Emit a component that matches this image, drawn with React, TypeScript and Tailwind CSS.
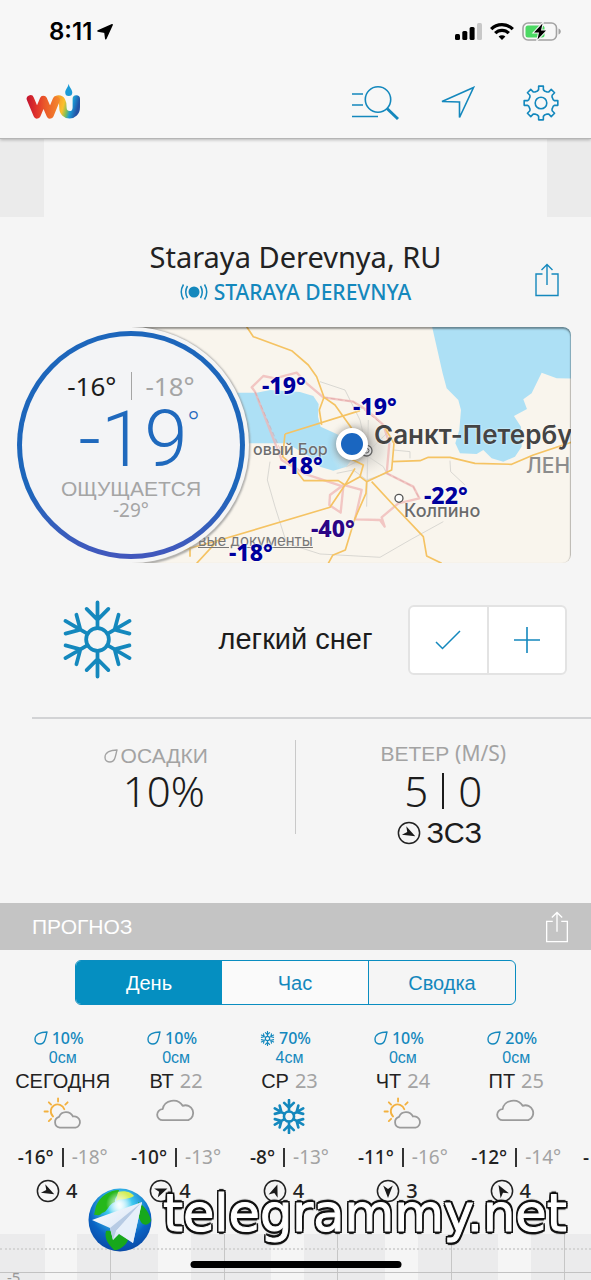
import React from "react";

const NOTO = "font-['Noto_Sans','Open_Sans',sans-serif]";

function Snowflake({ className, stroke }: { className: string; stroke: number }) {
  return (
    <svg viewBox="-36 -40 72 80" className={className} fill="none" stroke="#1488bd" strokeWidth={stroke} strokeLinecap="round" aria-hidden="true">
      <circle r="11.5" />
      {[0, 60, 120, 180, 240, 300].map((angle) => (
        <path key={angle} d="M0 -12V-37.5M-11 -31L0 -20L11 -31" transform={`rotate(${angle})`} />
      ))}
    </svg>
  );
}

function Drop({ className }: { className: string }) {
  return (
    <svg viewBox="0 0 14 14" className={className} fill="none" stroke="currentColor" strokeWidth="1.4" strokeLinejoin="round" aria-hidden="true">
      <path d="M13 1C7 1 1 3 1 8.5C1 11.500 3.500 13 6 13C11.500 13 11.500 6 13 1Z" />
    </svg>
  );
}

function WindArrow({ angle, className }: { angle: number; className: string }) {
  return (
    <svg viewBox="-12 -12 24 24" className={className} aria-hidden="true">
      <circle r="10.6" fill="none" stroke="#222" strokeWidth="1.5" />
      <path d="M0 -7L4.800 5.500L0 2L-4.800 5.500Z" fill="#1a1a1a" transform={`rotate(${angle})`} />
    </svg>
  );
}

function SunCloud() {
  return (
    <svg viewBox="130 618 120 100" className="h-[33px] w-10" fill="none" strokeWidth="5.500" strokeLinecap="round" aria-label="Переменная облачность">
      <g stroke="#f3b13f">
        <path d="M160 677A21 21 0 1 1 194 655" />
        <path d="M175 622V632M147 634L154 641M204 634L197 641M134 662H144M147 691L154 684" />
      </g>
      <path d="M180 711A17 17 0 0 1 178 678A23 23 0 0 1 220 677A17 17 0 0 1 228 711Z" stroke="#9b9b9b" strokeLinejoin="round" />
    </svg>
  );
}

function Cloud() {
  return (
    <svg viewBox="470 625 120 74" className="h-[25px] w-10" fill="none" stroke="#9b9b9b" strokeWidth="5.500" strokeLinejoin="round" aria-label="Облачно">
      <path d="M490 694A16 16 0 0 1 490 661A32 29 0 0 1 550 651A22 22 0 0 1 567 694Z" />
    </svg>
  );
}

function Share({ className }: { className: string }) {
  return (
    <svg viewBox="0 0 24 34" className={className} fill="none" stroke="currentColor" strokeWidth="1.4" aria-hidden="true">
      <path d="M7.500 11H1V32.500H23V11H16.500M12 22V2M6.500 7L12 1.500L17.500 7" />
    </svg>
  );
}

function gearPath() {
  const points: string[] = [];
  for (let i = 0; i < 8; i++) {
    [[-16, 12.6], [-10, 13.6], [-8, 17], [8, 17], [10, 13.6], [16, 12.6]].forEach(([offset, radius]) => {
      const a = ((i * 45 + offset - 90) * Math.PI) / 180;
      points.push(`${(Math.cos(a) * radius).toFixed(2)} ${(Math.sin(a) * radius).toFixed(2)}`);
    });
  }
  return `M${points.join("L")}Z`;
}

function StatusBar() {
  return (
    <div className="flex h-[62px] items-center justify-between pr-[30px] pl-[49px]">
      <div className="flex items-center gap-[5px] pt-[2px]">
        <span className="font-['Inter',sans-serif] text-2xl font-semibold text-black">8:11</span>
        <svg viewBox="0 0 16 16" className="size-4" aria-hidden="true">
          <path d="M15.200 .8L8.800 14.800L7.900 8.200L1 7Z" stroke="#000" strokeWidth="1.500" strokeLinejoin="round" />
        </svg>
      </div>
      <div className="flex items-center gap-2">
        <svg viewBox="0 0 27 17" className="h-[17px] w-[27px]" aria-hidden="true">
          <rect y="11" width="5" height="6" rx="1.500" />
          <rect x="7.300" y="8" width="5" height="9" rx="1.500" />
          <rect x="14.600" y="4" width="5" height="13" rx="1.500" />
          <rect x="22" width="5" height="17" rx="1.500" fill="#c8c8c8" />
        </svg>
        <svg viewBox="0 0 24 17" className="h-[17px] w-6" fill="none" stroke="#000" strokeWidth="3.200" aria-hidden="true">
          <path d="M1.200 6.200C7 .2 17 .2 22.800 6.200M5.200 10.200C9 6.300 15 6.300 18.800 10.200" />
          <path d="M12 17L8.600 13.400C10.500 11.800 13.500 11.800 15.400 13.400Z" fill="#000" stroke="none" />
        </svg>
        <svg viewBox="0 0 39 19" className="h-[19px] w-[39px]" aria-hidden="true">
          <rect x="1" y="1" width="33.500" height="17" rx="5" fill="none" stroke="#a3a3a3" strokeWidth="1.600" />
          <rect x="3.500" y="3.500" width="19" height="12" rx="2.500" fill="#4cd964" />
          <path d="M36.500 6.500C39.500 7.500 39.500 11.500 36.500 12.500Z" fill="#a3a3a3" />
          <path d="M20.500 1.500L12 10.500H17L15.500 17.500L24 8.500H19Z" stroke="#f7f7f7" strokeWidth="2" paintOrder="stroke" />
        </svg>
      </div>
    </div>
  );
}

function Logo() {
  return (
    <svg viewBox="78 248 164 110" className="h-[37px] w-[55px]" fill="none" strokeWidth="22" strokeLinecap="round" strokeLinejoin="round" role="img" aria-label="Weather Underground">
      <defs>
        <linearGradient id="w" gradientUnits="userSpaceOnUse" x1="82" y1="0" x2="178" y2="0">
          <stop offset="0" stopColor="#c4162f" />
          <stop offset=".3" stopColor="#e2352b" />
          <stop offset=".55" stopColor="#ea5a2a" />
          <stop offset="1" stopColor="#f58a2c" />
        </linearGradient>
        <linearGradient id="u" gradientUnits="userSpaceOnUse" x1="168" y1="305" x2="232" y2="322">
          <stop offset="0" stopColor="#f59a2a" />
          <stop offset=".35" stopColor="#fbc02d" />
          <stop offset=".55" stopColor="#7fbf5a" />
          <stop offset=".72" stopColor="#1b9bd7" />
          <stop offset="1" stopColor="#2452a4" />
        </linearGradient>
      </defs>
      <path d="M172 296C184 294 188 304 188 321C188 350 228 350 228 320V295" stroke="url(#u)" />
      <path d="M91 295L111 343L130 297L150 343L168 299" stroke="url(#w)" />
      <path d="M205 250C203 262 195 268 195 276A10.500 10.500 0 0 0 216 276C216 268 208 262 205 250Z" fill="#1b9bd7" />
    </svg>
  );
}

function Header() {
  return (
    <header className="relative border-b border-[#b5b5b5] bg-[#f7f7f7] shadow-[0_1px_3px_rgba(0,0,0,0.25)]">
      <StatusBar />
      <div className="flex h-[76px] items-center justify-between pt-[6px] pr-8 pl-[26px]">
        <a href="#home" className="mb-1"><Logo /></a>
        <nav className="flex items-center gap-[42px]">
          <button type="button" aria-label="Поиск">
            <svg viewBox="0 0 47 35" className="h-[35px] w-[47px]" fill="none" stroke="#1488bd" strokeWidth="1.600" aria-hidden="true">
              <circle cx="26" cy="13.500" r="12.700" />
              <path d="M0 8H11M0 19H11M0 30.500H26" />
              <path d="M35 22.500L46 33" strokeWidth="3" />
            </svg>
          </button>
          <button type="button" aria-label="Моё местоположение">
            <svg viewBox="0 0 40 35" className="h-[35px] w-10" fill="none" stroke="#1488bd" strokeWidth="1.600" aria-hidden="true">
              <path d="M32.500 1.500L1 15.500L18.500 16V31.500Z" />
            </svg>
          </button>
          <button type="button" aria-label="Настройки">
            <svg viewBox="-18 -18 36 36" className="size-9" fill="none" stroke="#1488bd" strokeWidth="1.600" strokeLinejoin="round" aria-hidden="true">
              <path d={gearPath()} />
              <circle r="5.800" />
            </svg>
          </button>
        </nav>
      </div>
    </header>
  );
}

const readings = [
  { text: "-19°", className: "left-[131px] top-[47px] text-[#00009c]" },
  { text: "-19°", className: "left-[222px] top-[68px] text-[#00009c]" },
  { text: "-18°", className: "left-[148px] top-[127px] text-[#00009c]" },
  { text: "-22°", className: "left-[293px] top-[157px] text-[#00009c]" },
  { text: "-40°", className: "left-[180px] top-[190px] text-[#2c0585]" },
  { text: "-18°", className: "left-[98px] top-[214px] text-[#00009c]" },
];

function CityMap() {
  return (
    <div className="relative h-[236px] flex-1 overflow-hidden rounded-r-lg bg-[#f9f5ed] font-['Inter',sans-serif] whitespace-nowrap">
      <svg className="absolute inset-0 size-full" fill="none" aria-hidden="true">
        <defs>
          <radialGradient id="urban">
            <stop offset="0" stopColor="#c9c7c3" stopOpacity=".9" />
            <stop offset=".5" stopColor="#dcd9d3" stopOpacity=".7" />
            <stop offset="1" stopColor="#f9f5ed" stopOpacity="0" />
          </radialGradient>
          <filter id="soft" x="-20%" y="-20%" width="140%" height="140%"><feGaussianBlur stdDeviation="1" /></filter>
        </defs>
        <g transform="translate(89 -17) scale(.3333)" strokeLinejoin="round">
          <path d="M634 40L650 110L668 190L680 235L715 270L723 300L718 360L706 400L720 430L770 432L790 420L815 445L850 455L885 440L905 410L903 350L882 318L921 297L910 268L935 250L965 188L1010 205L1060 206V40Z" fill="#ade0f5" />
          <path d="M0 248H110L150 240L240 246L280 258L296 282L294 320L302 350L350 372L392 395L400 440L380 470L340 482L300 470L270 440L200 400H0Z" fill="#ade0f5" />
          <circle cx="432" cy="410" r="105" fill="url(#urban)" />
          <path d="M150 455L142 510L165 590L200 700L300 732L480 742L570 690L670 635M300 215L375 240L420 330L445 440L490 470L500 490L440 510L400 480L350 490M520 420L570 425V445M690 452L692 485L735 525M445 330L440 590M500 370L420 450L380 470" stroke="#d3d1cc" strokeWidth="2.500" />
          <path d="M105 245L95 232L130 198L165 205L230 188L260 220L310 262L400 275L440 300L490 345L508 400L500 490L580 530L598 565L535 580L485 622L494 650L480 630L405 628L425 540L370 525L330 555L328 585L362 608L370 530L250 490L185 450L105 245" stroke="#efb6b4" strokeOpacity=".75" strokeWidth="7" />
          <path d="M105 245L190 440L250 490M310 262L400 275L490 345M500 490L580 530L598 565" stroke="#d99a9c" strokeOpacity=".8" strokeWidth="2" strokeDasharray="14 8" />
          <path d="M80 50L100 80L215 122L265 165L290 200L312 262L345 285L395 355M312 262L298 300L305 345M195 372L420 302M195 372L188 440L215 465L252 512H355L375 525L420 500L430 465L380 440M-110 720L0 690L330 592L375 525L405 475M515 455L600 452L625 442H690L765 460L875 463L940 435L1060 395M420 500L440 515L438 550L405 625L376 720L338 736L325 760M440 515L515 480L522 400L490 345M455 515L520 585L610 680L620 738L665 760M-70 760L-10 695M-90 700V740" stroke="#f5c363" strokeWidth="5" />
          <circle cx="440" cy="422" r="16" stroke="#666" strokeWidth="4" fill="#eee" />
          <circle cx="440" cy="422" r="7" stroke="#666" strokeWidth="3" />
          <circle cx="537" cy="565" r="12" stroke="#555" strokeWidth="4" fill="#fff" />
        </g>
        <circle cx="0" cy="119" r="118" stroke="#8a8a8a" strokeWidth="2" filter="url(#soft)" />
      </svg>
      <div className="absolute inset-0 rounded-r-lg shadow-[inset_0_2px_2px_rgba(0,0,0,0.4),inset_-1px_0_1px_rgba(0,0,0,0.15)]" />
      <span className="absolute top-[112px] left-[122px] text-base leading-5 font-medium text-[#6e6e6e] [text-shadow:0_0_2px_#fff]">овый Бор</span>
      <span className="absolute top-[92px] left-[243px] text-[26px] leading-8 font-semibold text-[#444] [text-shadow:0_0_2px_#fff]">Санкт-Петербу</span>
      <span className="absolute top-[125px] left-[395px] text-[21px] leading-7 font-medium text-[#8c8c8c]">ЛЕН</span>
      <span className="absolute top-[173px] left-[273px] text-lg leading-[22px] font-medium text-[#6b6b6b] [text-shadow:0_0_2px_#fff]">Колпино</span>
      <a href="#legal" className="absolute top-[204px] left-[67px] text-[15px] leading-5 text-[#777] underline">вые документы</a>
      <span className="absolute top-[101px] left-[205px] size-8 rounded-full border-[5px] border-white bg-[#1a66c0] shadow-[0_1px_8px_rgba(0,0,0,0.45)]" />
      {readings.map((r, i) => (
        <span key={i} className={`absolute ${NOTO} text-[23px] leading-[22px] font-extrabold [text-shadow:0_0_3px_#fff,0_0_2px_#fff] ${r.className}`}>{r.text}</span>
      ))}
    </div>
  );
}

function Current() {
  return (
    <section className="relative flex pr-5 pl-[131px]">
      <CityMap />
      <div className="absolute top-0 left-[13px] flex size-[236px] items-center justify-center rounded-full bg-[#f5f5f5]">
        <div className="size-[228px] rounded-full bg-linear-to-b from-[#1d66bb] from-70% to-[#4257bd] p-[5px]">
          <div className={`flex size-full flex-col items-center rounded-full bg-[#f3f4f6] pt-8 ${NOTO}`}>
            <div className="flex items-center gap-[14px] text-[26px] leading-9">
              <span className="text-[#1c1c1c]">-16°</span>
              <span className="h-7 w-px bg-[#a5a5a5]" />
              <span className="text-[#a5a5a5]">-18°</span>
            </div>
            <div className="flex items-start text-[#1f69bd]">
              <span className="pl-4 font-['Roboto',sans-serif] text-[78px] leading-[72px] font-light">-19</span>
              <span className="text-[28px] leading-8 font-light">°</span>
            </div>
            <span className="pt-[2px] font-['Liberation_Sans',sans-serif] text-[21px] leading-[22px] text-[#a5a5a5]">ОЩУЩАЕТСЯ</span>
            <span className="text-[19px] leading-5 text-[#a5a5a5]">-29°</span>
          </div>
        </div>
      </div>
    </section>
  );
}

function Condition() {
  return (
    <section className="grid grid-cols-[1fr_auto_1fr] items-center px-6 pt-[37px] pb-[38px]">
      <Snowflake className="ml-[37px] h-[79px] w-[73px]" stroke={3.8} />
      <h2 className="text-[29px] text-[#1c1c1c]">легкий снег</h2>
      <div className="flex h-[70px] w-[159px] justify-self-end rounded-md border-2 border-[#e3e3e3] bg-white">
        <button type="button" aria-label="Подтвердить" className="flex flex-1 items-center justify-center border-r-2 border-[#e3e3e3]">
          <svg viewBox="0 0 26 20" className="h-5 w-[26px]" fill="none" stroke="#1488bd" strokeWidth="1.500" aria-hidden="true"><path d="M1 12L7.500 18.500L25 1" /></svg>
        </button>
        <button type="button" aria-label="Добавить" className="flex flex-1 items-center justify-center">
          <svg viewBox="0 0 26 26" className="size-[26px]" fill="none" stroke="#1488bd" strokeWidth="1.600" aria-hidden="true"><path d="M13 0V26M0 13H26" /></svg>
        </button>
      </div>
    </section>
  );
}

function Stats() {
  return (
    <section>
      <div className="ml-8 h-[2px] bg-[#d2d3d5]" />
      <div className="grid grid-cols-2 pt-[21px] pb-[52px]">
        <div className="relative flex flex-col items-center pt-[3px] pl-8">
          <div className="flex items-center gap-[3px] pr-4 text-[21px] leading-[26px] text-[#a3a3a3]"><Drop className="size-[14px]" />ОСАДКИ</div>
          <div className={`${NOTO} text-[42px] leading-[44px] font-light text-[#1c1c1c]`}>10%</div>
          <div className="absolute top-0 right-0 h-[94px] w-px bg-[#c9c9c9]" />
        </div>
        <div className="flex flex-col items-center">
          <div className="text-[21px] leading-[26px] text-[#a3a3a3]">ВЕТЕР <span className={NOTO}>(M/S)</span></div>
          <div className={`flex items-center gap-[14px] ${NOTO} text-[42px] leading-[48px] font-light text-[#1c1c1c]`}>
            5<span className="h-9 w-[2px] bg-[#1c1c1c]" />0
          </div>
          <div className="flex items-center gap-[6px] pr-2 text-[29px] leading-9 text-[#1c1c1c]"><WindArrow angle={117} className="size-6" />ЗСЗ</div>
        </div>
      </div>
    </section>
  );
}

const days = [
  { chance: "10%", amount: "0см", name: "СЕГОДНЯ", date: "", sky: "sun", high: "-16°", low: "-18°", wind: 4, angle: 117 },
  { chance: "10%", amount: "0см", name: "ВТ", date: "22", sky: "cloud", high: "-10°", low: "-13°", wind: 4, angle: 68 },
  { chance: "70%", amount: "4см", name: "СР", date: "23", sky: "snow", high: "-8°", low: "-13°", wind: 4, angle: 20 },
  { chance: "10%", amount: "0см", name: "ЧТ", date: "24", sky: "sun", high: "-11°", low: "-16°", wind: 3, angle: 180 },
  { chance: "20%", amount: "0см", name: "ПТ", date: "25", sky: "cloud", high: "-12°", low: "-14°", wind: 4, angle: -30 },
];

function Forecast() {
  return (
    <section>
      <div className="flex h-[47px] items-center justify-between bg-[#c4c4c4] pr-[22px] pl-8 text-white">
        <h2 className="text-[21px]">ПРОГНОЗ</h2>
        <button type="button" aria-label="Поделиться прогнозом"><Share className="h-8 w-6" /></button>
      </div>
      <div className="mx-[75px] mt-[10px] flex h-[45px] overflow-hidden rounded-md border border-[#0a8dc0] text-xl text-[#1488bd]">
        <button type="button" aria-pressed="true" className="flex-1 bg-[#058fc1] text-white">День</button>
        <button type="button" className="flex-1 border-r border-[#0a8dc0] bg-[#fafafa]">Час</button>
        <button type="button" className="flex-1">Сводка</button>
      </div>
      <div className="mr-[18px] ml-[6px] grid auto-cols-[20%] grid-flow-col pt-[23px]">
        {days.map((d) => (
          <article key={d.name} className={`flex flex-col items-center whitespace-nowrap ${NOTO}`}>
            <div className="flex items-center gap-1 pr-2 text-base leading-5 font-medium text-[#1488bd]">
              {d.sky === "snow" ? <Snowflake className="size-[15px]" stroke={6} /> : <Drop className="size-[14px]" />}
              {d.chance}
            </div>
            <div className="font-['Liberation_Sans',sans-serif] text-base leading-[19px] text-[#1488bd]">{d.amount}</div>
            <h3 className="flex gap-[6px] text-xl leading-7 text-[#222]">
              <span className="font-['Liberation_Sans',sans-serif]">{d.name}</span>
              {d.date && <span className="text-[#a3a3a3]">{d.date}</span>}
            </h3>
            <div className="flex h-12 items-start pt-[2px]">
              {d.sky === "sun" && <SunCloud />}
              {d.sky === "cloud" && <Cloud />}
              {d.sky === "snow" && <Snowflake className="mt-[2px] h-[35px] w-8" stroke={6} />}
            </div>
            <div className="flex items-center gap-2 text-[19px] leading-7 text-[#222]">
              <span className="font-medium">{d.high}</span>
              <span className="h-[19px] w-[2px] bg-[#333]" />
              <span className="text-[#a3a3a3]">{d.low}</span>
            </div>
            <div className="flex items-center gap-[6px] pt-2 pr-3 text-[20px] leading-6 font-medium text-[#222]">
              <WindArrow angle={d.angle} className="size-6" />
              {d.wind}
            </div>
          </article>
        ))}
        <article className={`pt-[115px] pl-[10px] ${NOTO} text-[19px] leading-7 font-medium text-[#222]`}>-</article>
      </div>
    </section>
  );
}

function Chart() {
  return (
    <section className="relative mt-[31px] h-[46px] overflow-hidden">
      <div className="mr-[60px] -ml-9 grid h-full auto-cols-[20%] grid-flow-col">
        {[0, 1, 2, 3, 4, 5].map((i) => (
          <div key={i} className="flex">
            <div className="w-[30%] border-r border-[#c6c6c6] bg-[#ebebec]" />
            <div className="w-[41%] bg-[#ebebec]" />
          </div>
        ))}
      </div>
      <div className="absolute inset-x-0 top-[14px] border-t-2 border-dotted border-[#d5d5d5]" />
      <div className="absolute inset-x-0 top-[38px] border-t border-[#c2c2c2]" />
      <span className={`absolute top-[35px] left-[7px] ${NOTO} text-[15px] leading-4 text-[#999]`}>-5</span>
    </section>
  );
}

function Watermark() {
  return (
    <div className="absolute bottom-[28px] left-[88px] flex items-start gap-[11px] whitespace-nowrap">
      <svg viewBox="0 0 64 64" className="size-16" aria-hidden="true">
        <defs>
          <radialGradient id="globe" cx=".5" cy=".3" r=".7">
            <stop offset="0" stopColor="#d8fbff" />
            <stop offset=".3" stopColor="#3cc8ee" />
            <stop offset=".7" stopColor="#0a63c4" />
            <stop offset="1" stopColor="#0a4aa6" />
          </radialGradient>
          <radialGradient id="glow"><stop offset="0" stopColor="#fff" stopOpacity=".95" /><stop offset="1" stopColor="#fff" stopOpacity="0" /></radialGradient>
          <linearGradient id="plane" x1="0" y1="0" x2="1" y2="1"><stop offset="0" stopColor="#fff" /><stop offset="1" stopColor="#cbdcf2" /></linearGradient>
        </defs>
        <circle cx="32" cy="32" r="31.500" fill="url(#globe)" />
        <path d="M8 18C12 8 22 2 31 2C30 8 26 10 27 14C20 16 20 24 14 25C11 29 8 26 6 27Z" fill="#25b81a" />
        <path d="M30 4C38 2 44 5 46 8C40 12 34 10 28 13Z" fill="#d2ee58" />
        <path d="M50 14C57 18 62 26 63 33C60 38 54 38 52 32C48 26 52 20 50 14Z" fill="#17a81c" />
        <path d="M18 43C26 42 40 46 40 52C38 58 30 63 26 62C20 56 16 50 18 43Z" fill="#17a81c" />
        <circle cx="31" cy="16" r="13" fill="url(#glow)" />
        <path d="M4 32L54 14L45 55L31 46L25 52L22 40Z" fill="url(#plane)" />
        <path d="M22 40L54 14L28 43L25 52Z" fill="#b7cbe4" />
        <path d="M28 43L54 14L45 55Z" fill="#e6effa" />
      </svg>
      <span className="font-['DejaVu_Sans',sans-serif] text-[51px] leading-[52px] text-white [-webkit-text-stroke:1px_#fff] [text-shadow:2px_0_#111,-2px_0_#111,0_2px_#111,0_-2px_#111,2px_2px_#111,-2px_2px_#111,2px_-2px_#111,-2px_-2px_#111,0_3px_1px_#111,0_-3px_1px_#111]">telegrammy.net</span>
    </div>
  );
}

export default function App() {
  return (
    <main className="relative min-h-screen overflow-hidden bg-[#f5f5f5] font-['Liberation_Sans',Arial,sans-serif]">
      <Header />
      <div className="flex h-[78px] justify-between">
        <div className="w-11 bg-[#ebebeb]" />
        <div className="w-11 bg-[#ebebeb]" />
      </div>
      <section className={`grid grid-cols-[1fr_auto_1fr] items-center pt-[22px] pb-[18px] ${NOTO}`}>
        <div className="col-start-2 text-center">
          <h1 className="text-[29px] leading-9 text-[#222]">Staraya Derevnya, RU</h1>
          <a href="#station" className="flex items-center justify-center gap-[6px] text-[21px] leading-[34px] font-medium text-[#1488bd]">
            <svg viewBox="0 0 28 18" className="h-[18px] w-7" fill="none" stroke="currentColor" strokeWidth="1.500" aria-hidden="true">
              <circle cx="14" cy="9" r="5.500" fill="currentColor" stroke="none" />
              <path d="M7.500 3Q4 9 7.500 15M3.500 1.500Q-1 9 3.500 16.500M20.500 3Q24 9 20.500 15M24.500 1.500Q29 9 24.500 16.500" />
            </svg>
            STARAYA DEREVNYA
          </a>
        </div>
        <button type="button" aria-label="Поделиться" className="mr-8 justify-self-end pt-3 text-[#1488bd]"><Share className="h-[34px] w-6" /></button>
      </section>
      <Current />
      <Condition />
      <Stats />
      <Forecast />
      <Chart />
      <Watermark />
      <div className="absolute bottom-3 left-1/2 h-[7px] w-[211px] -translate-x-1/2 rounded-full bg-black" />
    </main>
  );
}
